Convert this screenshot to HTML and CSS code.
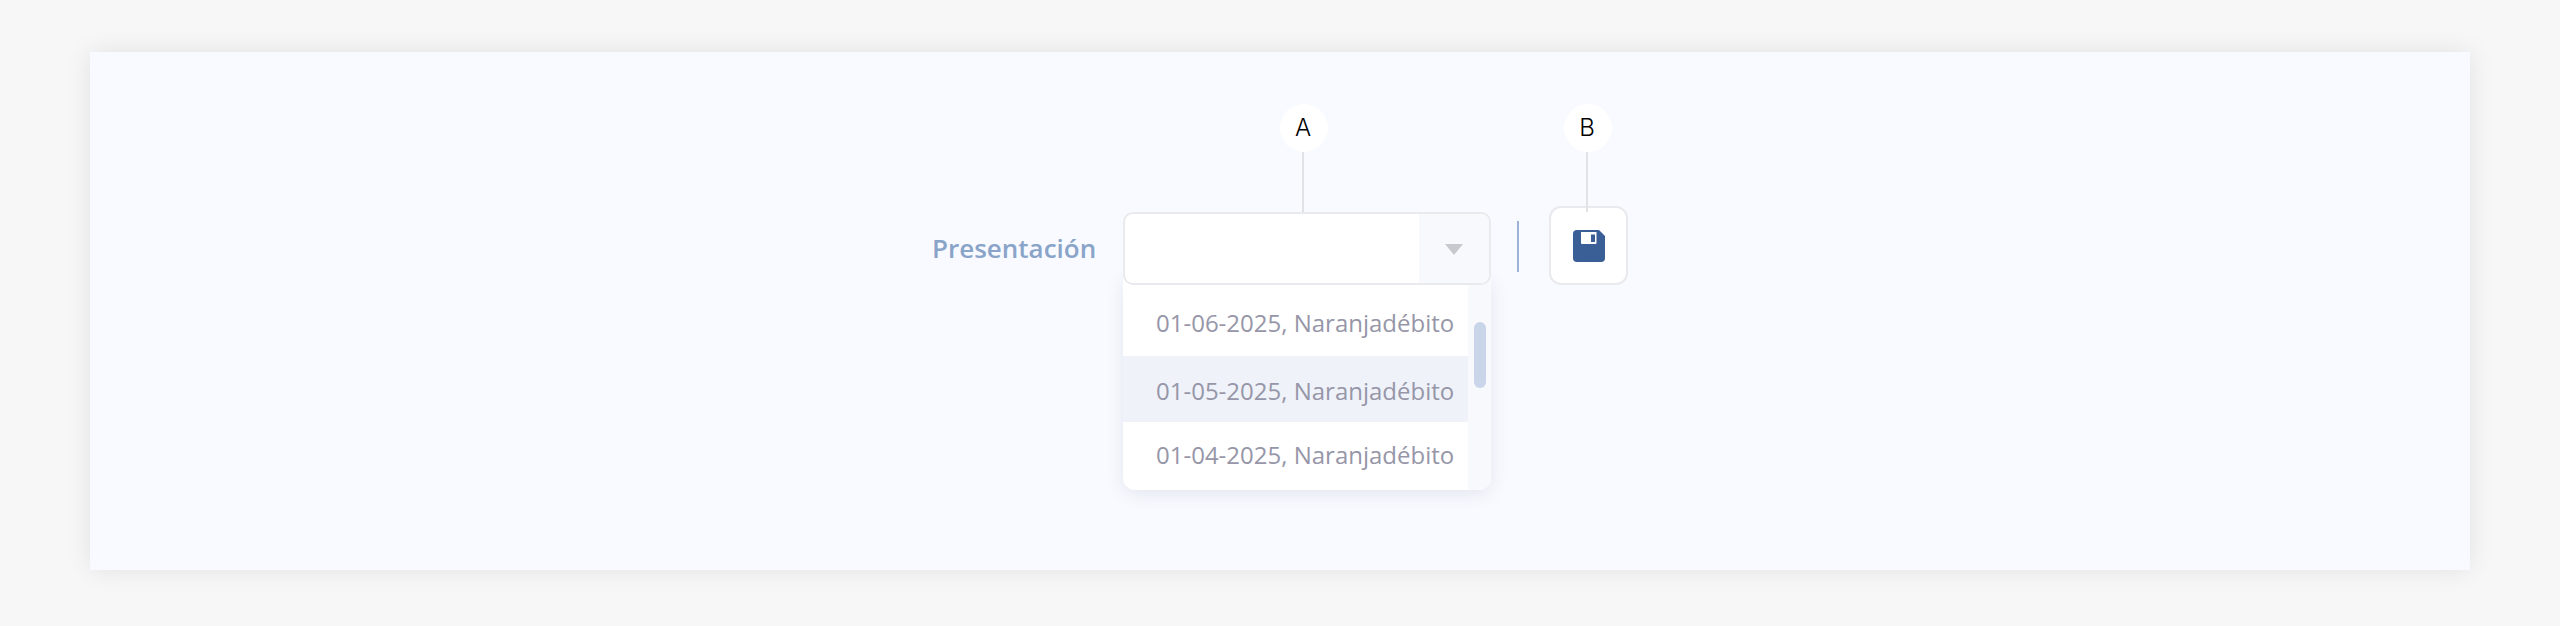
FILE: index.html
```html
<!DOCTYPE html>
<html lang="es">
<head>
<meta charset="utf-8">
<title>Presentación</title>
<link rel="stylesheet" href="styles.css">
</head>
<body>
<main class="panel">
  <div class="form-row">
    <label class="field-label">Presentación</label>
    <div class="select">
      <div class="select-box">
        <div class="select-value"></div>
        <div class="select-toggle"><span class="caret"></span></div>
      </div>
      <div class="menu">
        <ul class="menu-list">
          <li class="menu-item item-first">01-06-2025, Naranjadébito</li>
          <li class="menu-item item-active">01-05-2025, Naranjadébito</li>
          <li class="menu-item item-last">01-04-2025, Naranjadébito</li>
        </ul>
        <div class="scroll-track"><div class="scroll-thumb"></div></div>
      </div>
    </div>
    <div class="divider"></div>
    <button class="save-button" type="button" aria-label="Guardar">
      <svg class="save-icon" viewBox="0 0 32 32" width="32" height="32">
        <path fill="#3a5f96" d="M4 0H26L32 6V28A4 4 0 0 1 28 32H4A4 4 0 0 1 0 28V4A4 4 0 0 1 4 0Z"/>
        <path fill="#ffffff" d="M8 2H23.500V13A1 1 0 0 1 22.500 14H9A1 1 0 0 1 8 13Z"/>
        <rect fill="#3a5f96" x="18" y="4.500" width="4" height="7.500"/>
      </svg>
    </button>
  </div>
  <div class="callout callout-a"><span class="callout-badge">A</span><span class="callout-line"></span></div>
  <div class="callout callout-b"><span class="callout-badge">B</span><span class="callout-line"></span></div>
</main>
</body>
</html>
```
FILE: styles.css
```css
* { box-sizing: border-box; }
html, body { margin: 0; padding: 0; }
body {
  height: 626px;
  overflow: hidden;
  background: #f7f7f7;
  font-family: "Open Sans", "Noto Sans", sans-serif;
}
.panel {
  position: relative;
  margin: 52px 90px 0;
  height: 518px;
  padding: 154px 0 0 842px;
  background: #f8faff;
  box-shadow: 0 0 24px rgba(0, 0, 0, 0.09);
}
.form-row {
  display: flex;
  align-items: flex-end;
}
.field-label {
  width: 163px;
  margin: 0 28px 19px 0;
  font-size: 26px;
  line-height: 36px;
  font-weight: 600;
  color: #8aa4c9;
  white-space: nowrap;
}
.select {
  position: relative;
  width: 368px;
  height: 73px;
}
.select-box {
  position: relative;
  z-index: 2;
  display: flex;
  height: 73px;
  border: 2px solid #e9e9ee;
  border-radius: 10px;
  background: #fff;
  overflow: hidden;
}
.select-value { flex: 1; }
.select-toggle {
  display: flex;
  align-items: center;
  justify-content: center;
  width: 70px;
  background: #f8f9fd;
}
.caret {
  width: 0;
  height: 0;
  border-left: 9px solid transparent;
  border-right: 9px solid transparent;
  border-top: 11px solid #c8c8cf;
  margin-top: 2px;
}
.menu {
  position: absolute;
  z-index: 1;
  top: 66px;
  left: 0;
  right: 0;
  height: 212px;
  display: flex;
  background: #fff;
  border-radius: 0 0 12px 12px;
  box-shadow: 0 4px 18px rgba(60, 70, 110, 0.11);
  overflow: hidden;
}
.menu-list {
  flex: 1;
  margin: 0;
  padding: 10px 0 0;
  list-style: none;
}
.menu-item {
  display: flex;
  align-items: center;
  padding-left: 33px;
  font-size: 24px;
  color: #9696a8;
  white-space: nowrap;
}
.item-first { height: 68px; }
.item-active { height: 66px; padding-top: 2px; background: #eff2f9; }
.item-last { height: 64px; }
.scroll-track {
  width: 23px;
  background: #f8f9fd;
  padding: 44px 0 0 6px;
}
.scroll-thumb {
  width: 12px;
  height: 66px;
  border-radius: 6px;
  background: #c9d5e9;
}
.divider {
  width: 2px;
  height: 51px;
  margin: 0 30px 13px 26px;
  background: #9db3d6;
}
.save-button {
  display: flex;
  align-items: center;
  justify-content: center;
  width: 79px;
  height: 79px;
  padding: 0;
  border: 2px solid #e9e9ee;
  border-radius: 12px;
  background: #fff;
}
.save-icon { display: block; margin-top: 1px; }
.callout {
  position: absolute;
  top: 52px;
  width: 48px;
  display: flex;
  flex-direction: column;
  align-items: center;
}
.callout-a { left: 1190px; }
.callout-b { left: 1474px; }
.callout-badge {
  width: 48px;
  height: 48px;
  padding-right: 2px;
  border-radius: 50%;
  background: #fff;
  color: #000;
  font-family: "Inter", sans-serif;
  font-weight: 300;
  font-size: 24px;
  line-height: 48px;
  text-align: center;
}
.callout-line {
  width: 2px;
  height: 60px;
  margin-right: 2px;
  background: #e2e2e6;
}
```
